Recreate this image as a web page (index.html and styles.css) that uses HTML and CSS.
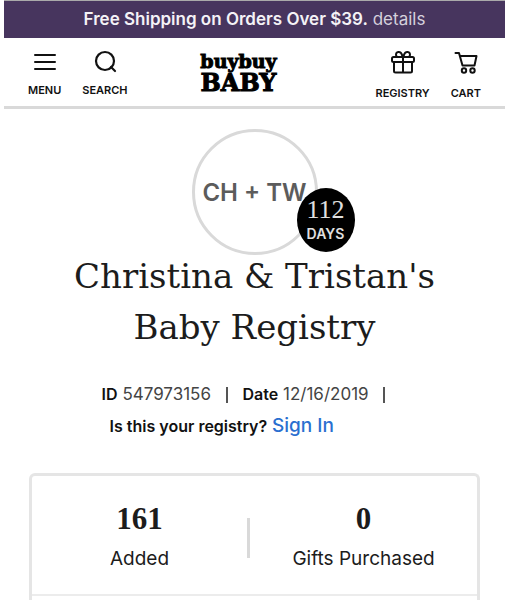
FILE: index.html
```html
<!DOCTYPE html>
<html lang="en">
<head>
    <meta charset="UTF-8">
    <meta name="viewport" content="width=device-width, initial-scale=1.0">
    <title>Christina &amp; Tristan's Baby Registry</title>
    <link rel="stylesheet" href="styles.css">
</head>
<body>
    <div class="promo">
        <strong>Free Shipping on Orders Over $39.</strong> <a href="#">details</a>
    </div>

    <header class="header">
        <nav class="nav">
            <button type="button" class="nav-item">
                <svg width="24" height="24" viewBox="0 0 24 24" fill="none" stroke="#111" stroke-width="2" stroke-linecap="round">
                    <path d="M2 5H22M2 12H22M2 19H22"/>
                </svg>
                <span>MENU</span>
            </button>
            <button type="button" class="nav-item">
                <svg width="24" height="24" viewBox="0 0 24 24" fill="none" stroke="#111" stroke-width="2.200" stroke-linecap="round">
                    <circle cx="12" cy="11" r="9"/>
                    <path d="M18 17L22 21"/>
                </svg>
                <span>SEARCH</span>
            </button>
        </nav>

        <a href="#" class="logo">
            <span class="logo-top">buybuy</span>
            <span class="logo-bottom">BABY</span>
        </a>

        <nav class="nav nav-right">
            <a href="#" class="nav-item">
                <svg width="24" height="24" viewBox="0 0 24 24" fill="none" stroke="#111" stroke-width="2" stroke-linejoin="round">
                    <rect x="1" y="7" width="22" height="5" rx="1.500"/>
                    <path d="M3 12V21a1.500 1.500 0 0 0 1.500 1.500h15A1.500 1.500 0 0 0 21 21V12M12 7V22.500"/>
                    <path d="M11.500 7C11 3 9 1.500 7 2C4.500 2.500 4.500 5.500 6 7M12.500 7C13 3 15 1.500 17 2C19.500 2.500 19.500 5.500 18 7"/>
                </svg>
                <span>REGISTRY</span>
            </a>
            <a href="#" class="nav-item">
                <svg width="24" height="24" viewBox="0 0 24 24" fill="none" stroke="#111" stroke-width="2" stroke-linecap="round" stroke-linejoin="round">
                    <path d="M1.500 3H5L8.500 15.500H20.500L22.500 6H6"/>
                    <circle cx="10" cy="20.500" r="2.200"/>
                    <circle cx="18.500" cy="20.500" r="2.200"/>
                </svg>
                <span>CART</span>
            </a>
        </nav>
    </header>

    <main class="registry">
        <div class="avatar">
            CH + TW
            <div class="countdown">
                <span class="countdown-number">112</span>
                <span class="countdown-label">DAYS</span>
            </div>
        </div>

        <h1 class="title">Christina &amp; Tristan's<br>Baby Registry</h1>

        <div class="meta">
            <p><b>ID</b> <span>547973156</span> <i class="bar"></i> <b>Date</b> <span>12/16/2019</span> <i class="bar"></i></p>
            <p class="owner"><b>Is this your registry?</b> <a href="#">Sign In</a></p>
        </div>

        <section class="card">
            <div class="stats">
                <div class="stat">
                    <span class="stat-number">161</span>
                    <span class="stat-label">Added</span>
                </div>
                <div class="divider"></div>
                <div class="stat stat-wide">
                    <span class="stat-number">0</span>
                    <span class="stat-label">Gifts Purchased</span>
                </div>
            </div>
        </section>
    </main>
</body>
</html>
```
FILE: styles.css
```css
* {
    box-sizing: border-box;
}
body {
    margin: 0;
    padding: 0 8px 0 4px;
    min-height: 100vh;
    display: flex;
    flex-direction: column;
    background-color: #fff;
    color: #1c1c1c;
    font-family: Inter, sans-serif;
}
a {
    color: inherit;
    text-decoration: none;
}
p {
    margin: 0;
}

/* Promo bar */
.promo {
    border-top: 1px solid #aaa;
    background-color: #47355e;
    color: #f4f2f6;
    font-size: 17px;
    line-height: 37px;
    text-align: center;
}
.promo strong {
    font-weight: 600;
}
.promo a {
    color: #d5d0dc;
}

/* Header */
.header {
    display: grid;
    grid-template-columns: 1fr auto 1fr;
    height: 71px;
    padding: 12px 24px 0;
    border-bottom: 3px solid #d9d9d9;
}
.nav {
    display: flex;
    align-items: flex-start;
    gap: 21px;
}
.nav-right {
    justify-content: flex-end;
}
.nav-item {
    display: flex;
    flex-direction: column;
    align-items: center;
    gap: 8px;
    padding: 0;
    border: 0;
    background: none;
    color: #111;
    font-family: inherit;
    font-size: 11px;
    font-weight: 600;
    line-height: 16px;
}
.nav-right .nav-item {
    gap: 11px;
}
.logo {
    display: flex;
    flex-direction: column;
    align-items: center;
    margin-right: 32px;
    color: #000;
    font-family: "DejaVu Serif", serif;
    font-weight: bold;
    -webkit-text-stroke: 1px #000;
}
.logo-top {
    font-size: 19px;
    line-height: 22px;
}
.logo-bottom {
    font-size: 24px;
    line-height: 22px;
}

/* Registry summary */
.registry {
    flex: 1;
    display: flex;
    flex-direction: column;
    align-items: center;
    padding: 20px 25px 0;
}
.avatar {
    position: relative;
    display: flex;
    align-items: center;
    justify-content: center;
    width: 126px;
    height: 126px;
    border: 3px solid #d9d9d9;
    border-radius: 50%;
    color: #5c5c5c;
    font-size: 24px;
    font-weight: 600;
    white-space: nowrap;
}
.countdown {
    position: absolute;
    right: -40px;
    bottom: 0;
    display: flex;
    flex-direction: column;
    align-items: center;
    width: 58px;
    height: 64px;
    padding-top: 8px;
    border-radius: 50%;
    background-color: #000;
    color: #e0e0e0;
}
.countdown-number {
    font-family: "Liberation Serif", serif;
    font-size: 26px;
    font-weight: normal;
    line-height: 28px;
}
.countdown-label {
    font-size: 14px;
    line-height: 20px;
}
.title {
    margin: -4px 0 0;
    font-family: "DejaVu Serif", serif;
    font-size: 34px;
    font-weight: normal;
    line-height: 51px;
    text-align: center;
}
.meta {
    padding: 25px 12px 0 0;
    font-size: 17px;
    line-height: 32px;
}
.meta b {
    color: #111;
    font-size: 16px;
    font-weight: 600;
}
.meta span {
    color: #444;
}
.bar {
    display: inline-block;
    height: 16px;
    margin: 0 10px;
    border-left: 2px solid #555;
    vertical-align: middle;
}
.owner {
    padding-left: 8px;
}
.owner a {
    color: #2a6fd0;
    font-size: 19px;
    font-weight: 500;
}

/* Stats card */
.card {
    flex: 1;
    align-self: stretch;
    margin-top: 31px;
    border: 3px solid #e5e5e5;
    border-bottom: 0;
    border-radius: 6px 6px 0 0;
}
.stats {
    display: flex;
    align-items: center;
    padding: 22px 0 16px;
    border-bottom: 2px solid #ececec;
}
.stat {
    flex: 18;
    display: flex;
    flex-direction: column;
    align-items: center;
}
.stat-wide {
    flex: 19;
}
.stat-number {
    font-family: "Liberation Serif", serif;
    font-size: 31px;
    font-weight: bold;
    line-height: 42px;
}
.stat-label {
    font-size: 19px;
    line-height: 38px;
}
.divider {
    width: 3px;
    height: 40px;
    background-color: #d9d9d9;
}
```
